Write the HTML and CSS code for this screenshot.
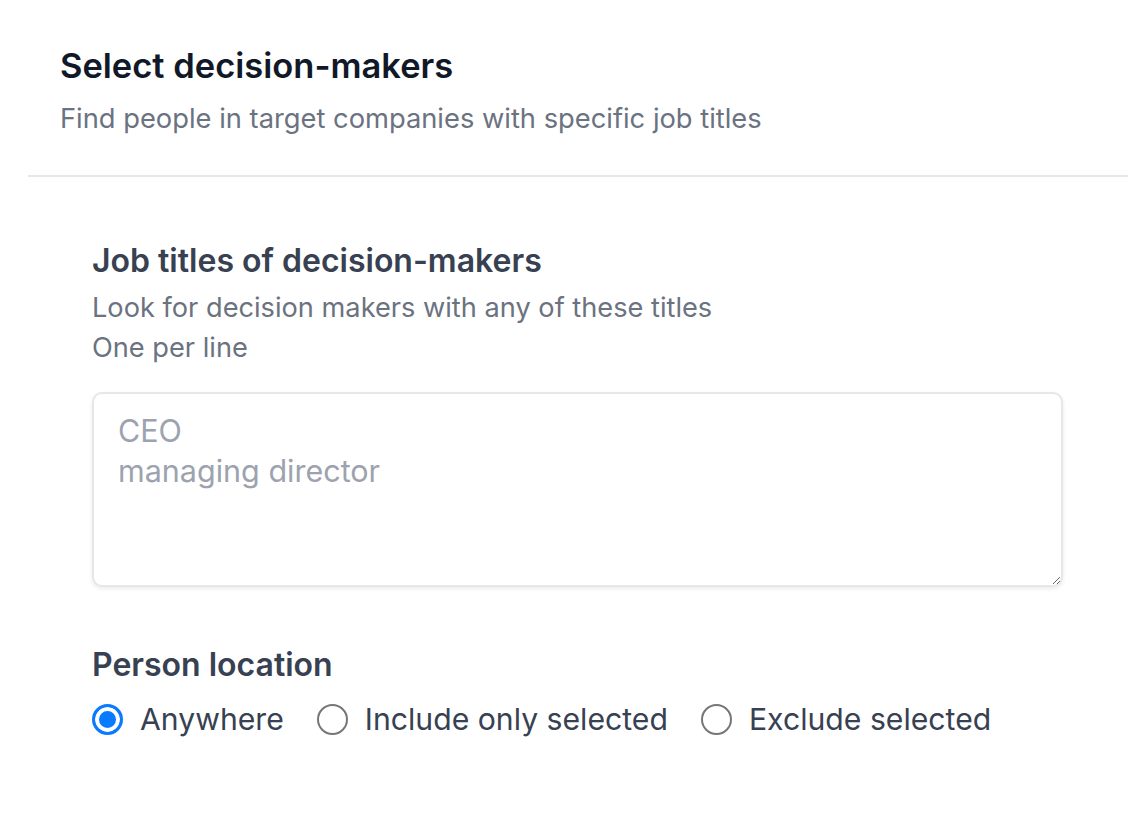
FILE: index.html
```html
<!DOCTYPE html>
<html lang="en">
<head>
<meta charset="utf-8">
<link rel="stylesheet" href="styles.css">
</head>
<body>
<div class="card">
  <header class="card-header">
    <h1 class="title">Select decision-makers</h1>
    <p class="subtitle">Find people in target companies with specific job titles</p>
  </header>
  <section class="card-body">
    <div class="field">
      <h2 class="field-label">Job titles of decision-makers</h2>
      <p class="field-help">Look for decision makers with any of these titles<br>One per line</p>
      <textarea class="textarea" placeholder="CEO&#10;managing director"></textarea>
    </div>
    <div class="field">
      <h2 class="field-label">Person location</h2>
      <div class="radios">
        <label class="radio"><span class="radio-dot checked"></span>Anywhere</label>
        <label class="radio"><span class="radio-dot"></span>Include only selected</label>
        <label class="radio"><span class="radio-dot"></span>Exclude selected</label>
      </div>
    </div>
  </section>
</div>
</body>
</html>
```

FILE: styles.css
```css
* { box-sizing: border-box; }
html, body { margin: 0; padding: 0; background: #fff; }
body {
  font-family: Inter, "Noto Sans", "Liberation Sans", sans-serif;
  color: #374151;
}
.card {
  margin-left: 28px;
  width: 1100px;
}
.card-header {
  padding: 44px 32px 38px;
  border-bottom: 2px solid #e5e7eb;
}
.title {
  margin: 0;
  font-size: 34.5px;
  line-height: 44px;
  font-weight: 600;
  color: #111827;
}
.subtitle {
  margin: 13px 0 0;
  font-size: 27.3px;
  line-height: 36px;
  color: #6b7280;
}
.card-body {
  padding: 62px 65px 60px 64px;
}
.field + .field { margin-top: 56px; }
.field-label {
  margin: 0;
  font-size: 32px;
  line-height: 44px;
  font-weight: 600;
  color: #374151;
}
.field-help {
  margin: 5px 0 0;
  font-size: 27.2px;
  line-height: 40px;
  color: #6b7280;
}
.textarea {
  display: block;
  width: 100%;
  height: 195px;
  margin-top: 24px;
  padding: 17px 24px;
  font-family: inherit;
  font-size: 30.5px;
  line-height: 40px;
  color: #111827;
  border: 2px solid #e5e7eb;
  border-radius: 10px;
  box-shadow: 0 2px 4px rgba(0,0,0,0.08);
  resize: vertical;
  outline: none;
}
.textarea::placeholder { color: #9ca3af; }
.radios {
  display: flex;
  gap: 33px;
  margin-top: 12px;
}
.radio {
  display: flex;
  align-items: center;
  gap: 17px;
  font-size: 30.2px;
  line-height: 40px;
  color: #374151;
}
.radio-dot {
  width: 31px;
  height: 31px;
  border-radius: 50%;
  border: 2px solid #767676;
  background: #fff;
  flex: none;
}
.radio-dot.checked {
  border: 3px solid #0a7aff;
  box-shadow: inset 0 0 0 4px #fff;
  background: #0a7aff;
}
```
